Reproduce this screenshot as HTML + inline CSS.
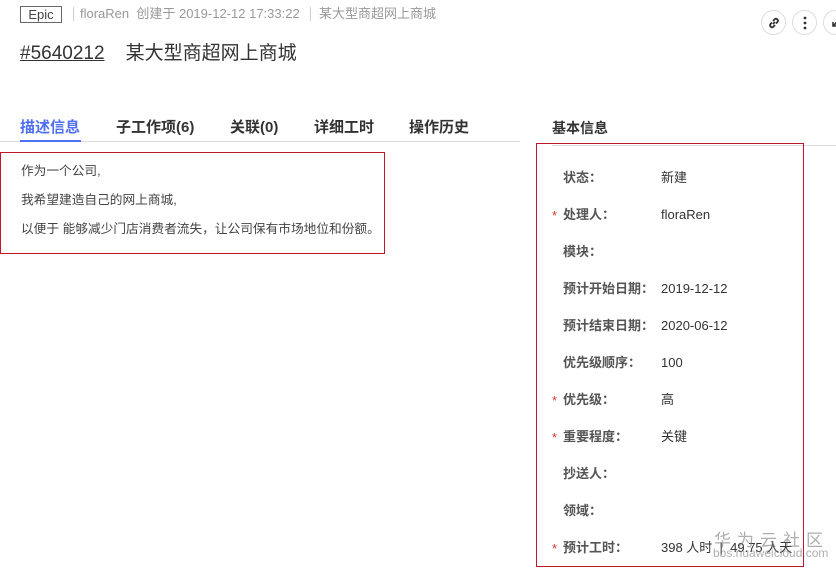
<!DOCTYPE html>
<html><head><meta charset="utf-8"><style>
*{margin:0;padding:0;box-sizing:border-box}
body{width:836px;height:568px;background:#fff;position:relative;overflow:hidden;font-family:"Liberation Sans","Noto Sans CJK SC",sans-serif;color:#333}
.a{position:absolute;white-space:nowrap}
.tag{left:20px;top:6px;width:42px;height:17px;border:1px solid #666;font-size:13px;line-height:15px;text-align:center;color:#444}
.meta{top:6px;font-size:13px;color:#999;line-height:16px}
.sep{top:7px;width:1px;height:14px;background:#ccc}
.tab{top:116px;font-size:15px;font-weight:bold;color:#333}
.lab{left:563px;font-size:13px;font-weight:bold;color:#555;line-height:16px;height:16px}
.val{left:661px;font-size:13px;color:#333;line-height:16px;height:16px}
.st{left:552px;font-size:13px;color:#d33;line-height:16px;margin-top:1px}
.ic{top:10px;width:25px;height:25px;border:1px solid #ddd;border-radius:50%;display:flex;align-items:center;justify-content:center}
.d{font-size:12.7px;color:#444;left:21px;line-height:16px}
</style></head><body>
<div class="a tag">Epic</div>
<div class="a sep" style="left:73px"></div>
<div class="a meta" style="left:80px">floraRen &nbsp;创建于 2019-12-12 17:33:22</div>
<div class="a sep" style="left:310px"></div>
<div class="a meta" style="left:319px">某大型商超网上商城</div>
<div class="a" style="left:20px;top:38px;font-size:19px;color:#333"><span style="text-decoration:underline">#5640212</span>&nbsp;&nbsp;&nbsp; 某大型商超网上商城</div>

<div class="a ic" style="left:761px"><svg width="14" height="14" viewBox="0 0 14 14" fill="none" stroke="#333" stroke-width="1.8"><path d="M6 8 L8 6"/><path d="M5 6.5 L3.5 8 a2 2 0 0 0 2.8 2.8 L8 9"/><path d="M9 7.5 L10.5 6 a2 2 0 0 0 -2.8 -2.8 L6 5"/></svg></div>
<div class="a ic" style="left:792px"><svg width="4" height="14"><circle cx="2" cy="2" r="1.4" fill="#333"/><circle cx="2" cy="7" r="1.4" fill="#333"/><circle cx="2" cy="12" r="1.4" fill="#333"/></svg></div>
<div class="a ic" style="left:823px"><svg width="10" height="10" viewBox="0 0 10 10" stroke="#333" stroke-width="1.6" fill="none"><path d="M8 2 L2 8 M2 4 V8 H6"/></svg></div>

<div class="a tab" style="left:20px;color:#4f6ef2">描述信息</div>
<div class="a tab" style="left:116px">子工作项(6)</div>
<div class="a tab" style="left:230px">关联(0)</div>
<div class="a tab" style="left:314px">详细工时</div>
<div class="a tab" style="left:409px">操作历史</div>
<div class="a" style="left:0;top:141px;width:520px;height:1px;background:#ddd"></div>
<div class="a" style="left:20px;top:140px;width:61px;height:2px;background:#4f6ef2"></div>

<div class="a" style="left:0;top:152px;width:385px;height:102px;border:1px solid #c0182a"></div>
<div class="a d" style="top:163px">作为一个公司,</div>
<div class="a d" style="top:192px">我希望建造自己的网上商城,</div>
<div class="a d" style="top:221px">以便于 能够减少门店消费者流失，让公司保有市场地位和份额。</div>

<div class="a" style="left:552px;top:118px;font-size:14px;font-weight:bold;color:#333">基本信息</div>
<div class="a" style="left:552px;top:145px;width:284px;height:1px;background:#ddd"></div>
<div class="a" style="left:536px;top:143px;width:268px;height:424px;border:1px solid #c0182a"></div>

<div class="a lab" style="top:170px">状态：</div><div class="a val" style="top:170px">新建</div>
<div class="a st" style="top:207px">*</div><div class="a lab" style="top:207px">处理人：</div><div class="a val" style="top:207px">floraRen</div>
<div class="a lab" style="top:244px">模块：</div>
<div class="a lab" style="top:281px">预计开始日期：</div><div class="a val" style="top:281px">2019-12-12</div>
<div class="a lab" style="top:318px">预计结束日期：</div><div class="a val" style="top:318px">2020-06-12</div>
<div class="a lab" style="top:355px">优先级顺序：</div><div class="a val" style="top:355px">100</div>
<div class="a st" style="top:392px">*</div><div class="a lab" style="top:392px">优先级：</div><div class="a val" style="top:392px">高</div>
<div class="a st" style="top:429px">*</div><div class="a lab" style="top:429px">重要程度：</div><div class="a val" style="top:429px">关键</div>
<div class="a lab" style="top:466px">抄送人：</div>
<div class="a lab" style="top:503px">领域：</div>
<div class="a st" style="top:540px">*</div><div class="a lab" style="top:540px">预计工时：</div><div class="a val" style="top:540px">398 人时 &nbsp;| &nbsp;49.75 人天</div>
<div class="a" style="left:714px;top:526px;font-size:17px;letter-spacing:6px;color:rgba(120,120,120,.6)">华为云社区</div>
<div class="a" style="left:713px;top:546px;font-size:12px;color:rgba(120,120,120,.6)">bbs.huaweicloud.com</div>
</body></html>
